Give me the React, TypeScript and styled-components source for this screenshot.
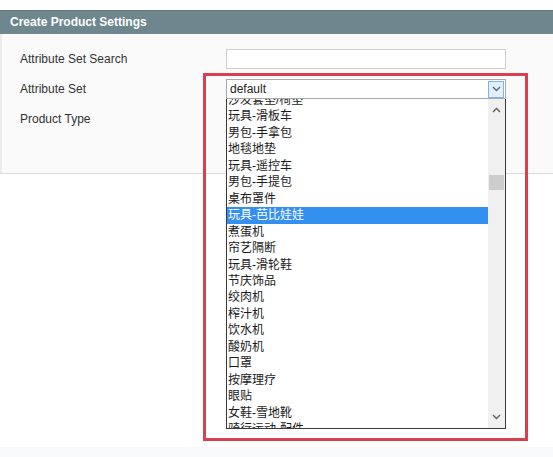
import React from 'react';
import styled, { createGlobalStyle } from 'styled-components';

const GlobalStyle = createGlobalStyle`
  html, body {
    margin: 0;
    padding: 0;
    background: #ffffff;
  }
  body {
    font-family: "Liberation Sans", Arial, "Noto Sans CJK SC", sans-serif;
    font-size: 12px;
    color: #333333;
  }
`;

const Page = styled.div`
  position: relative;
  width: 553px;
  height: 457px;
  overflow: hidden;
  padding-top: 10px;
  box-sizing: border-box;
  display: flex;
  flex-direction: column;
`;

const Panel = styled.section`
  background: #fafafa;
  border-bottom: 1px solid #dcdcdc;
`;

const PanelHeader = styled.h2`
  margin: 0;
  height: 23px;
  line-height: 23px;
  padding: 0 10px;
  background: #6e868e;
  border-top: 1px solid #5f767e;
  color: #ffffff;
  font-size: 12px;
  font-weight: bold;
`;

const PanelBody = styled.div`
  padding: 10px 0 39px 18px;
  border-left: 2px solid #ececec;
  display: grid;
  grid-template-columns: 206px 280px;
  grid-auto-rows: 30px;
  align-items: center;
`;

const Label = styled.label`
  font-size: 12px;
  color: #333333;
`;

const TextInput = styled.div`
  height: 20px;
  box-sizing: border-box;
  border: 1px solid #cfcfcf;
  background: #ffffff;
`;

const Spacer = styled.div`
  flex: 1;
`;

const BottomStrip = styled.div`
  height: 10px;
  background: #f7f9fa;
`;

const SelectBox = styled.div`
  height: 20px;
  box-sizing: border-box;
  border: 1px solid #a9a9a9;
  background: #ffffff;
  display: flex;
  align-items: center;
  padding-left: 3px;
  font-size: 12px;
  color: #222;
`;

const SelectText = styled.span`
  flex: 1;
`;

const ArrowButton = styled.div`
  width: 16px;
  height: 17px;
  box-sizing: border-box;
  margin-right: 1px;
  background: #e3f0fb;
  border: 1px solid #7eb4ea;
  display: flex;
  align-items: center;
  justify-content: center;
`;

const Popup = styled.div`
  position: absolute;
  left: 226px;
  top: 79px;
  width: 280px;
  display: flex;
  flex-direction: column;
`;

const ListBox = styled.div`
  height: 330px;
  box-sizing: border-box;
  border: 1px solid #3a3a3a;
  border-top: none;
  background: #ffffff;
  display: flex;
`;

const ListViewport = styled.div`
  flex: 1;
  overflow: hidden;
`;

const ListInner = styled.ul`
  list-style: none;
  margin: -7px 0 0;
  padding: 0;
`;

const Option = styled.li<{ $selected?: boolean }>`
  height: 16.46px;
  line-height: 16.46px;
  padding-left: 1px;
  font-size: 12px;
  white-space: nowrap;
  background: ${p => (p.$selected ? '#3390f0' : 'transparent')};
  color: ${p => (p.$selected ? '#ffffff' : '#1a1a1a')};
`;

const ScrollTrack = styled.div`
  width: 17px;
  background: #f0f0f0;
  display: flex;
  flex-direction: column;
  align-items: center;
`;

const ScrollArrow = styled.div`
  height: 22px;
  width: 17px;
  display: flex;
  align-items: center;
  justify-content: center;
`;

const ScrollRail = styled.div`
  flex: 1;
  width: 100%;
  padding-top: 54px;
  box-sizing: border-box;
`;

const ScrollThumb = styled.div`
  height: 15px;
  margin: 0 1px;
  background: #cdcdcd;
`;

const Annotation = styled.div`
  position: absolute;
  left: 203px;
  top: 73px;
  width: 325px;
  height: 368px;
  box-sizing: border-box;
  border: 3px solid #d8404f;
  pointer-events: none;
`;

const Chevron: React.FC<{ up?: boolean; color?: string }> = ({ up, color = '#606060' }) => (
  <svg width="9" height="6" viewBox="0 0 9 6">
    <path
      d={up ? 'M1 5 L4.5 1.5 L8 5' : 'M1 1 L4.5 4.5 L8 1'}
      fill="none"
      stroke={color}
      strokeWidth="1.4"
    />
  </svg>
);

const options = [
  '沙发套垫/椅垫',
  '玩具-滑板车',
  '男包-手拿包',
  '地毯地垫',
  '玩具-遥控车',
  '男包-手提包',
  '桌布罩件',
  '玩具-芭比娃娃',
  '煮蛋机',
  '帘艺隔断',
  '玩具-滑轮鞋',
  '节庆饰品',
  '绞肉机',
  '榨汁机',
  '饮水机',
  '酸奶机',
  '口罩',
  '按摩理疗',
  '眼贴',
  '女鞋-雪地靴',
  '骑行运动-配件',
];

export default function App() {
  return (
    <>
      <GlobalStyle />
      <Page>
        <Panel>
          <PanelHeader>Create Product Settings</PanelHeader>
          <PanelBody>
            <Label>Attribute Set Search</Label>
            <TextInput />
            <Label>Attribute Set</Label>
            <div />
            <Label>Product Type</Label>
            <div />
          </PanelBody>
        </Panel>
        <Spacer />
        <BottomStrip />

        <Popup>
          <SelectBox>
            <SelectText>default</SelectText>
            <ArrowButton>
              <Chevron color="#4a6a8a" />
            </ArrowButton>
          </SelectBox>
          <ListBox>
            <ListViewport>
              <ListInner>
                {options.map(o => (
                  <Option key={o} $selected={o === '玩具-芭比娃娃'}>{o}</Option>
                ))}
              </ListInner>
            </ListViewport>
            <ScrollTrack>
              <ScrollArrow><Chevron up /></ScrollArrow>
              <ScrollRail><ScrollThumb /></ScrollRail>
              <ScrollArrow><Chevron /></ScrollArrow>
            </ScrollTrack>
          </ListBox>
        </Popup>

        <Annotation />
      </Page>
    </>
  );
}
